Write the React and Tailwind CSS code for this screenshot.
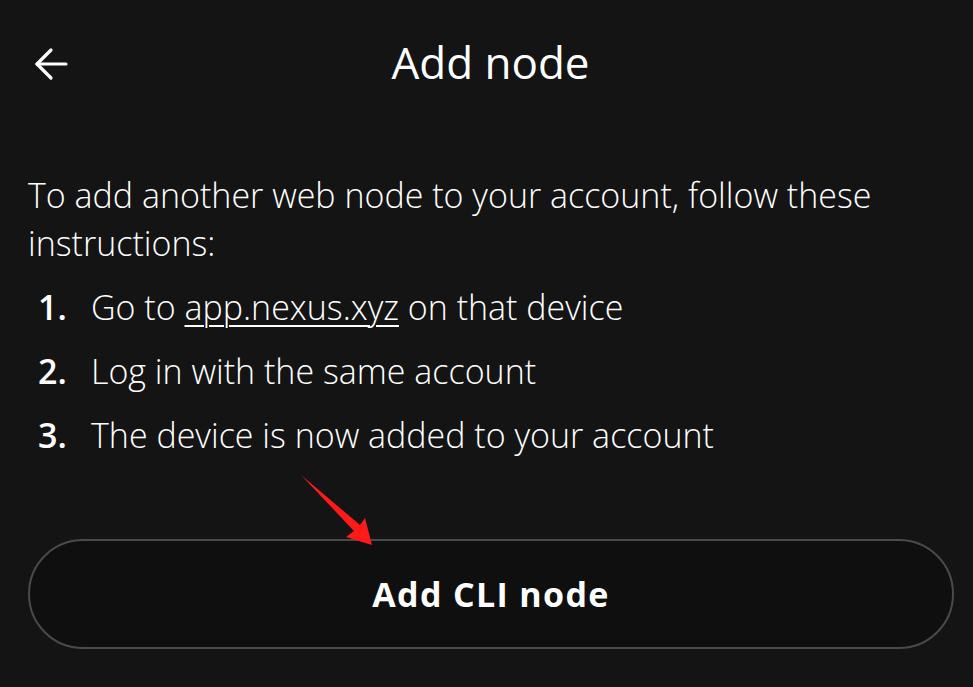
const steps = [
    <>Go to <span className="underline underline-offset-[5px] decoration-2">app.nexus.xyz</span> on that device</>,
    <>Log in with the same account</>,
    <>The device is now added to your account</>,
];

export default function App() {
    return (
        <div className="relative h-[687px] w-[973px] overflow-hidden bg-[#141414] text-white font-['Open_Sans',sans-serif]">
            <div className="flex h-[124px] items-center px-[28px]">
                <button className="flex h-[40px] w-[40px] items-center justify-center">
                    <svg width="40" height="40" viewBox="28 41 40 40" fill="none" stroke="white" strokeWidth="3.2" strokeLinecap="round" strokeLinejoin="round">
                        <path d="M37 63 H66" />
                        <path d="M51 49 L37 63 L51 77" />
                    </svg>
                </button>
                <h1 className="flex-1 pr-[32px] text-center text-[44px] font-normal leading-none">Add node</h1>
            </div>

            <div className="pl-[28px] pt-[47px]">
                <p className="pr-[28px] text-[34px] font-light leading-[48px]">
                    To add another web node to your account, follow these instructions:
                </p>
                <ol className="mt-[8px] flex flex-col">
                    {steps.map((step, i) => (
                        <li key={i} className="flex h-[64px] items-center text-[34px] font-light">
                            <span className="w-[63px] pl-[10px] font-semibold">{i + 1}.</span>
                            <span>{step}</span>
                        </li>
                    ))}
                </ol>

                <button className="mt-[72px] flex h-[110px] w-[926px] items-center justify-center rounded-full border-2 border-[#4a4a4a] bg-[#0f0f0f] text-[34px] font-bold tracking-[0.04em]">
                    Add CLI node
                </button>
            </div>

            <svg className="absolute left-0 top-0" width="973" height="687" viewBox="0 0 973 687">
                <polygon points="301,475 360,525 365,518 372,545 346,537 354,531" fill="#ff1a1a" />
            </svg>
        </div>
    );
}
